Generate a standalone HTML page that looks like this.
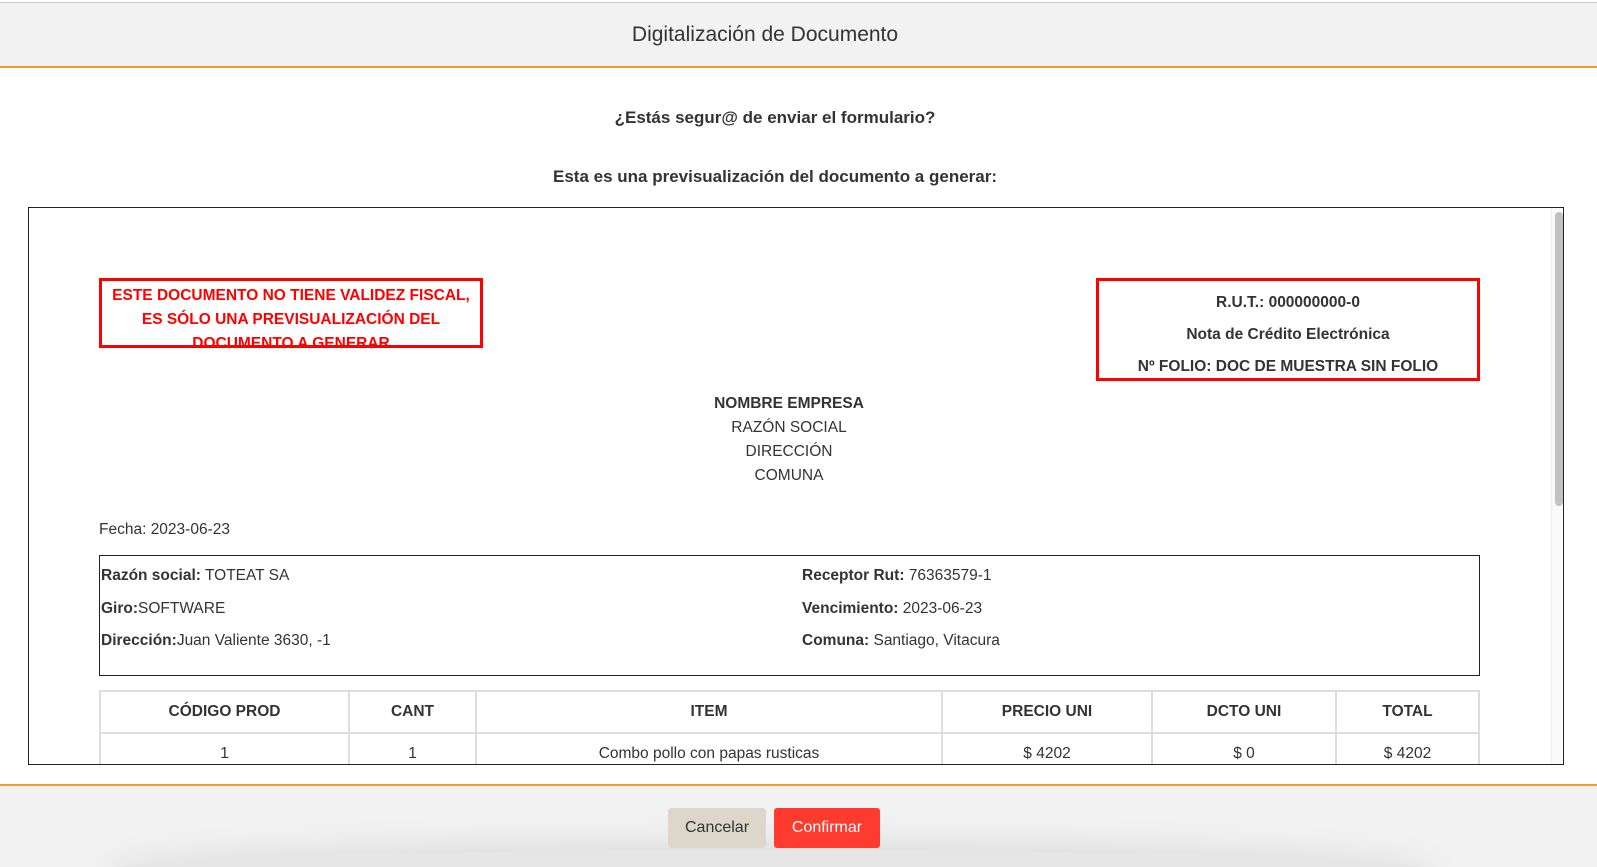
<!DOCTYPE html>
<html><head><meta charset="utf-8"><style>
*{box-sizing:border-box;margin:0;padding:0}
body{width:1597px;height:867px;overflow:hidden;background:#fff;font-family:"Liberation Sans",sans-serif;color:#333;position:relative}
.hdr{position:absolute;left:0;top:2px;width:1597px;height:66px;background:#f2f2f2;border-top:1px solid #ccc;border-bottom:2px solid #f39a2a}
.hdr div{width:1530px;text-align:center;font-size:21px;line-height:64px;color:#333}
.q{position:absolute;left:0;width:1550px;text-align:center;font-weight:bold;font-size:17px;color:#333}
.frame{position:absolute;left:28px;top:207px;width:1536px;height:558px;border:1px solid #222;overflow:hidden;background:#fff}
.sb{position:absolute;left:1522px;top:0;width:14px;height:100%;background:#fafafa;border-left:1px solid #eee}
.sb i{position:absolute;left:3px;top:4px;width:8px;height:294px;border-radius:4px;background:#c1c1c1}
.ab{position:absolute}
.red{border:3px solid #f00;color:#f00;font-weight:bold;font-size:15.5px;text-align:center;line-height:24px;overflow:hidden}
.rb{border:3px solid #f00;font-weight:bold;font-size:15.5px;text-align:center;line-height:32px;color:#333}
.c{text-align:center;font-size:15.5px;line-height:24px}
.info{border:1px solid #222;font-size:15.5px}
.info p{position:absolute;line-height:20px}
table{position:absolute;left:70px;top:482px;border-collapse:collapse;font-size:15.5px}
td,th{border:2px solid #ddd;text-align:center;height:42px}
th{font-weight:bold}
.ftr{position:absolute;left:0;top:784px;width:1597px;height:83px;background:#f2f2f2;border-top:2px solid #f39a2a;overflow:hidden}
.ftr i{position:absolute;left:110px;top:64px;width:1320px;height:40px;border-radius:50%;box-shadow:0 0 30px 10px rgba(0,0,0,0.08);background:#e6e6e6}
.btn{position:absolute;top:808px;height:40px;border-radius:3px;font-size:16px;line-height:40px;text-align:center}
</style></head><body>
<div class="hdr"><div>Digitalización de Documento</div></div>
<div class="q" style="top:108px">¿Estás segur@ de enviar el formulario?</div>
<div class="q" style="top:167px">Esta es una previsualización del documento a generar:</div>
<div class="frame">
 <div class="sb"><i></i></div>
 <div class="ab red" style="left:70px;top:70px;width:384px;height:70px;padding-top:3px">ESTE DOCUMENTO NO TIENE VALIDEZ FISCAL,<br>ES SÓLO UNA PREVISUALIZACIÓN DEL<br>DOCUMENTO A GENERAR</div>
 <div class="ab rb" style="left:1067px;top:70px;width:384px;height:103px;padding-top:6px">R.U.T.: 000000000-0<br>Nota de Crédito Electrónica<br>Nº FOLIO: DOC DE MUESTRA SIN FOLIO</div>
 <div class="ab c" style="left:560px;top:184px;width:400px"><b>NOMBRE EMPRESA</b><br>RAZÓN SOCIAL<br>DIRECCIÓN<br>COMUNA</div>
 <div class="ab" style="left:70px;top:313px;font-size:15.5px">Fecha: 2023-06-23</div>
 <div class="ab info" style="left:70px;top:347px;width:1381px;height:121px">
  <p style="left:1px;top:10px"><b>Razón social:</b> TOTEAT SA</p>
  <p style="left:1px;top:43px"><b>Giro:</b>SOFTWARE</p>
  <p style="left:1px;top:75px"><b>Dirección:</b>Juan Valiente 3630, -1</p>
  <p style="left:702px;top:10px"><b>Receptor Rut:</b> 76363579-1</p>
  <p style="left:702px;top:43px"><b>Vencimiento:</b> 2023-06-23</p>
  <p style="left:702px;top:75px"><b>Comuna:</b> Santiago, Vitacura</p>
 </div>
 <table>
  <tr><th style="width:249px">CÓDIGO PROD</th><th style="width:127px">CANT</th><th style="width:466px">ITEM</th><th style="width:210px">PRECIO UNI</th><th style="width:184px">DCTO UNI</th><th style="width:143px">TOTAL</th></tr>
  <tr><td>1</td><td>1</td><td>Combo pollo con papas rusticas</td><td>$ 4202</td><td>$ 0</td><td>$ 4202</td></tr>
 </table>
</div>
<div class="ftr"><i></i></div>
<div class="btn" style="left:668px;width:98px;background:#ddd6cb;color:#333">Cancelar</div>
<div class="btn" style="left:774px;width:106px;background:#ff3b30;color:#fff">Confirmar</div>
</body></html>
